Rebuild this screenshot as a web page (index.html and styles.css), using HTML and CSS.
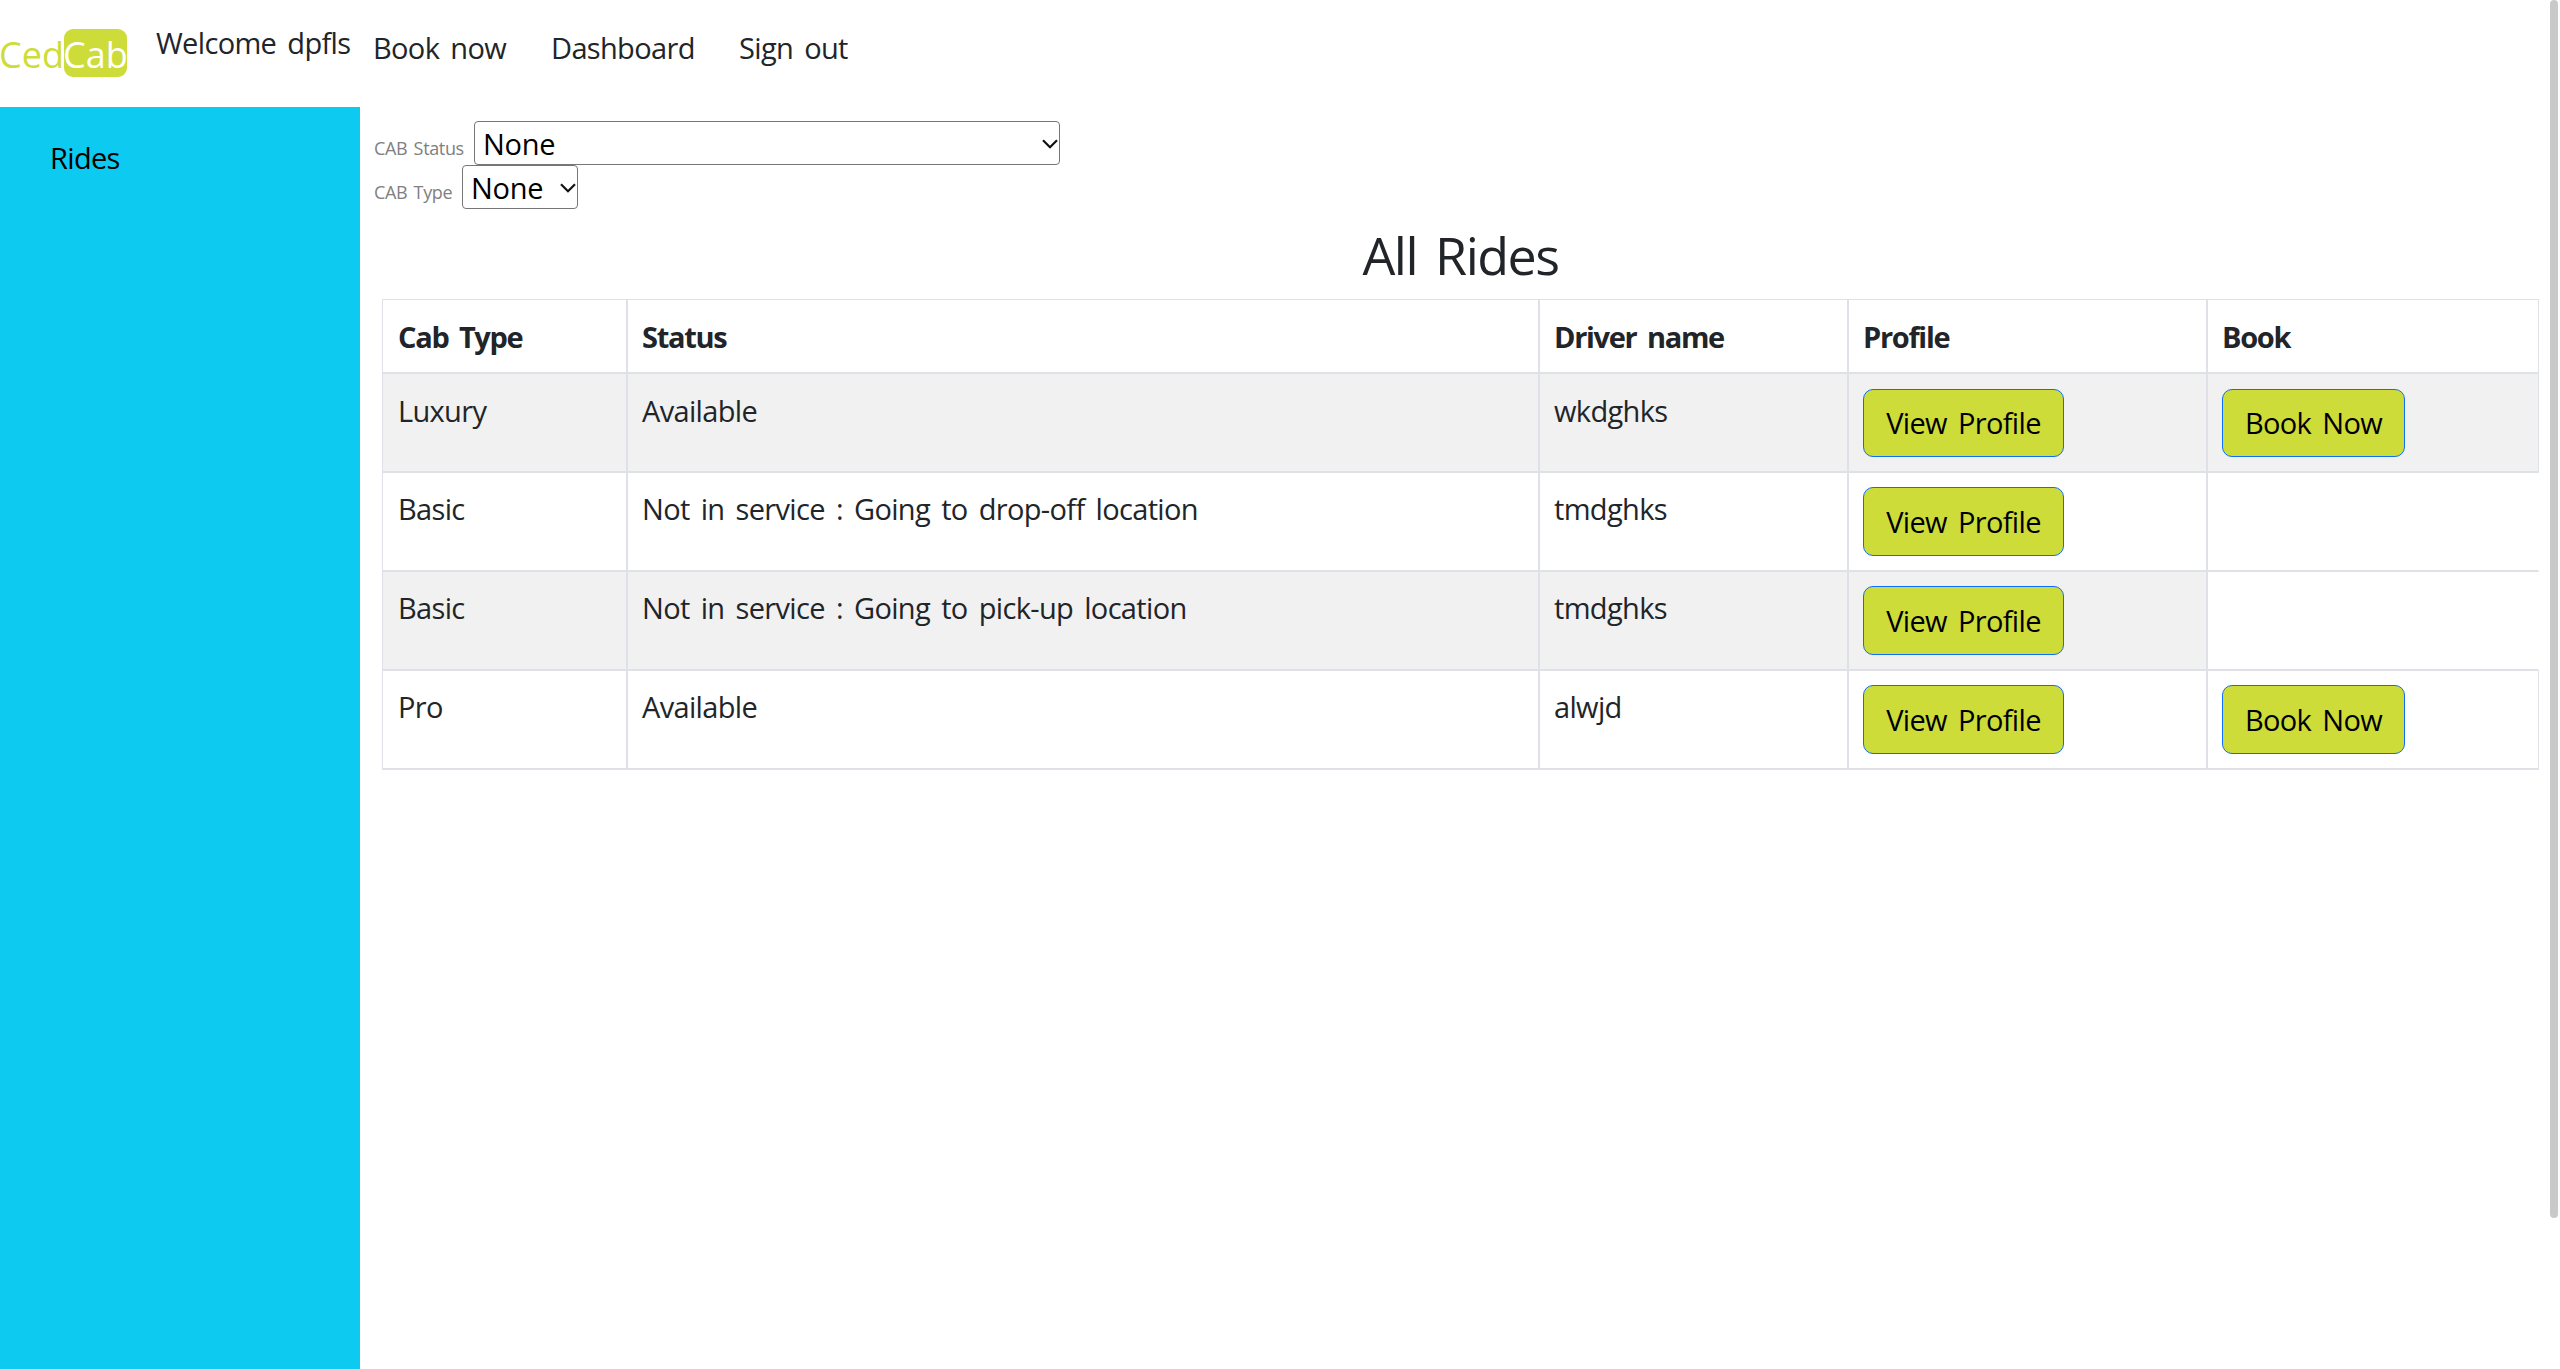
FILE: index.html
```
<!DOCTYPE html>
<html lang="en">
<head>
<meta charset="utf-8">
<title>CedCab</title>
<link rel="stylesheet" href="styles.css">
</head>
<body>
<header class="topbar">
  <a class="logo"><span class="logo-ced">Ced</span><span class="logo-cab">Cab</span></a>
  <span class="welcome">Welcome dpfls</span>
  <a class="nav-link">Book now</a>
  <a class="nav-link">Dashboard</a>
  <a class="nav-link">Sign out</a>
</header>
<div class="layout">
  <aside class="sidebar"><a class="side-link">Rides</a></aside>
  <main class="content">
    <div class="filter">
      <label class="filter-label filter-label-status" for="status">CAB Status</label>
      <span class="select-wrap select-status">
        <select id="status" class="select"><option>None</option></select>
        <svg class="chevron" viewBox="0 0 16 10"><path d="M1 1.2 8 8.2 15 1.2"/></svg>
      </span>
    </div>
    <div class="filter">
      <label class="filter-label filter-label-type" for="type">CAB Type</label>
      <span class="select-wrap select-type">
        <select id="type" class="select"><option>None</option></select>
        <svg class="chevron" viewBox="0 0 16 10"><path d="M1 1.2 8 8.2 15 1.2"/></svg>
      </span>
    </div>
    <h1 class="title">All Rides</h1>
    <table class="rides">
      <colgroup><col class="col-type"><col class="col-status"><col class="col-driver"><col class="col-profile"><col class="col-book"></colgroup>
      <thead>
        <tr><th>Cab Type</th><th>Status</th><th>Driver name</th><th>Profile</th><th>Book</th></tr>
      </thead>
      <tbody>
        <tr><td>Luxury</td><td>Available</td><td>wkdghks</td><td><button class="btn btn-view">View Profile</button></td><td><button class="btn btn-book">Book Now</button></td></tr>
        <tr><td>Basic</td><td>Not in service : Going to drop-off location</td><td>tmdghks</td><td><button class="btn btn-view">View Profile</button></td><td class="empty"></td></tr>
        <tr><td>Basic</td><td>Not in service : Going to pick-up location</td><td>tmdghks</td><td><button class="btn btn-view">View Profile</button></td><td class="empty"></td></tr>
        <tr><td>Pro</td><td>Available</td><td>alwjd</td><td><button class="btn btn-view">View Profile</button></td><td><button class="btn btn-book">Book Now</button></td></tr>
      </tbody>
    </table>
  </main>
</div>
<div class="scroll-thumb"></div>
</body>
</html>
```
FILE: styles.css
```
* { box-sizing: border-box; }

body {
  margin: 0;
  height: 1369px;
  overflow: hidden;
  display: flex;
  flex-direction: column;
  background: #fff;
  color: #212529;
  font-family: "Open Sans", "Noto Sans", sans-serif;
  font-size: 29px;
  font-weight: 400;
  line-height: 44px;
  letter-spacing: -0.66px;
  word-spacing: 4.2px;
}

.topbar {
  display: grid;
  grid-template-columns: 156px 217px 178px 188px auto;
  height: 107px;
  flex: none;
}

.logo {
  display: flex;
  padding-top: 29px;
  font-size: 36px;
  line-height: 51px;
  letter-spacing: 0;
  color: #cddc39;
}
.logo-ced { width: 64px; margin-left: -1px; margin-right: 1px; }
.logo-cab {
  width: 63px;
  height: 48px;
  background: #cddc39;
  border-radius: 9px;
  color: #fff;
  text-indent: -1px;
}

.welcome { padding-top: 21px; }
.nav-link { padding-top: 26px; }

.layout { display: flex; flex: 1; }

.sidebar {
  width: 360px;
  padding: 29px 0 0 50px;
  background: #0dcaf0;
  color: #000;
}

.content { flex: 1; padding: 14px 20px 0 12px; }

.filter { display: flex; height: 44px; }
.filter-label {
  padding: 5px 0 0 2px;
  font-size: 18px;
  letter-spacing: -0.35px;
  word-spacing: 2px;
  color: #808080;
}
.filter-label-status { width: 102px; }
.filter-label-type { width: 90px; }

.select-wrap { position: relative; }
.select-status { width: 586px; }
.select-type { width: 116px; }
.select {
  appearance: none;
  display: block;
  width: 100%;
  height: 44px;
  padding: 0 0 0 8px;
  border: 1px solid #767676;
  border-radius: 4px;
  background: #fff;
  color: #000;
  font: inherit;
  letter-spacing: -0.3px;
}
.chevron {
  position: absolute;
  right: 2px;
  top: 18px;
  width: 16px;
  height: 10px;
  fill: none;
  stroke: #111;
  stroke-width: 2.2;
}

.title {
  margin: 15px 0 13px 9px;
  text-align: center;
  font-size: 52px;
  font-weight: 400;
  line-height: 62px;
  letter-spacing: -1.5px;
  word-spacing: 6px;
}

.rides {
  width: 2157px;
  margin-left: 10px;
  table-layout: fixed;
  border-collapse: separate;
  border-spacing: 0;
  border-top: 1px solid #dee2e6;
  border-left: 1px solid #dee2e6;
}
.col-type { width: 245px; }
.col-status { width: 912px; }
.col-driver { width: 309px; }
.col-profile { width: 359px; }
.col-book { width: 331px; }

.rides th, .rides td {
  height: 99px;
  padding: 14px 14px 0;
  border-right: 2px solid #dee2e6;
  border-bottom: 2px solid #dee2e6;
  text-align: left;
  vertical-align: top;
}
.rides th:first-child, .rides td:first-child { padding-left: 15px; }
.rides th {
  height: 74px;
  padding-top: 15px;
  font-weight: 700;
  letter-spacing: -1.3px;
}
.rides tr > :last-child { border-right-width: 1px; }
.rides tbody tr:first-child td { padding-top: 15px; }
.rides tbody tr:nth-child(odd) td { background: #f1f1f1; }
.rides tbody tr td.empty { background: #fff; border-right-color: transparent; }

.btn {
  display: block;
  height: 69px;
  padding: 0;
  background: #cddc39;
  border: 1px solid #0d6efd;
  border-radius: 10px;
  color: #000;
  font: inherit;
  line-height: 67px;
  letter-spacing: inherit;
  word-spacing: inherit;
}
.rides tbody tr:first-child .btn { height: 68px; line-height: 66px; }
.btn-view { width: 201px; }
.btn-book { width: 183px; }

.scroll-thumb {
  position: absolute;
  right: 2px;
  top: 0;
  width: 8px;
  height: 1218px;
  border-radius: 4px;
  background: #c9c9c9;
}
```
